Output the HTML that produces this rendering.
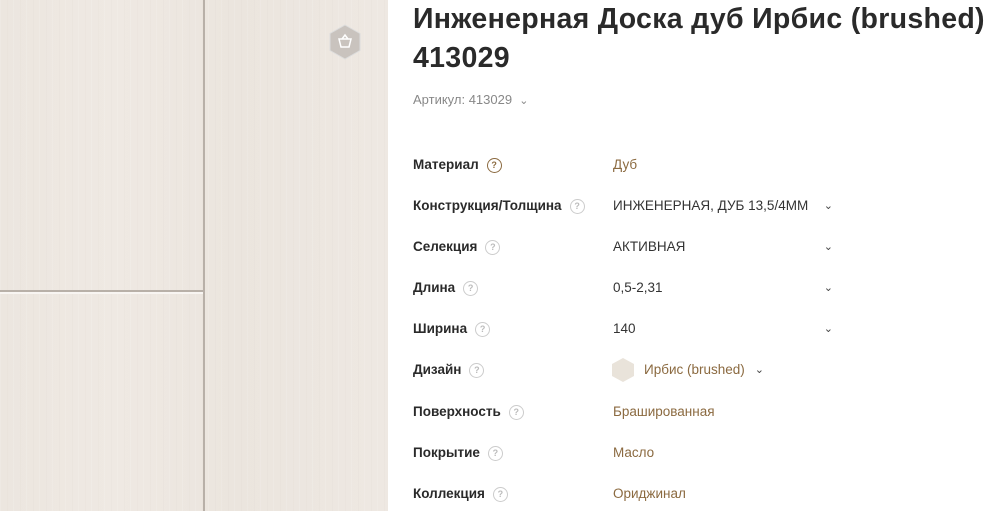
<!DOCTYPE html>
<html><head><meta charset="utf-8"><style>
body{margin:0;width:992px;height:511px;overflow:hidden;background:#fff;font-family:"Liberation Sans","DejaVu Sans",sans-serif;position:relative}
.img{position:absolute;left:0;top:0;width:388px;height:511px;background:linear-gradient(90deg,#ece6df,#efe9e3 30%,#ebe5de 60%,#eee8e2);overflow:hidden}
.img:before{content:"";position:absolute;inset:0;background:repeating-linear-gradient(90deg,rgba(255,255,255,.12) 0 1px,transparent 1px 7px,rgba(200,190,180,.07) 7px 8px,transparent 8px 13px)}
.vs{position:absolute;left:203px;top:0;width:2px;height:511px;background:#b8b0a8}
.hs{position:absolute;left:0;top:290px;width:203px;height:2px;background:#b8b0a8}
.hs2{position:absolute;left:0;top:292px;width:203px;height:2px;background:#f8f5f2}
h1{position:absolute;left:413px;top:0px;margin:0;font-size:28.5px;line-height:39px;font-weight:bold;color:#2a2a2a;letter-spacing:.3px;white-space:nowrap}
.art{position:absolute;left:413px;top:92px;font-size:13px;color:#888}
.row{position:absolute;left:413px;width:420px;height:20px;font-size:13.5px;line-height:20px}
.l{position:absolute;left:0;font-weight:bold;color:#2a2a2a}
.q{display:inline-block;width:13px;height:13px;border:1.3px solid #ccc;border-radius:50%;font-size:9px;line-height:13px;text-align:center;color:#bbb;font-weight:bold;vertical-align:1px;margin-left:8px}
.v{position:absolute;left:200px;color:#8b6a40}
.d{color:#333}
.c{position:absolute;right:0;top:0;font-size:11px;color:#444}
</style></head><body>
<div class="img"><div class="vs"></div><div class="hs"></div><div class="hs2"></div>
<svg style="position:absolute;left:329px;top:24px" width="32" height="36" viewBox="0 0 32 36"><polygon points="16,1 31,9.5 31,26.5 16,35 1,26.5 1,9.5" fill="#c9c3be" stroke="#ddd" /><path d="M10 15h12l-2 8h-8z M13 15l3-4 3 4" fill="none" stroke="#fff" stroke-width="1.5"/></svg></div>
<h1>Инженерная Доска дуб Ирбис (brushed)<br>413029</h1>
<div class="art">Артикул: 413029 &nbsp;<span style="font-size:11px">&#8964;</span></div>
<div class="row" style="top:155px"><span class="l">Материал<span class="q" style="border-color:#8b6a40;color:#8b6a40">?</span></span><span class="v">Дуб</span></div>
<div class="row" style="top:196px"><span class="l">Конструкция/Толщина<span class="q">?</span></span><span class="v d">ИНЖЕНЕРНАЯ, ДУБ 13,5/4ММ</span><span class="c">⌄</span></div>
<div class="row" style="top:237px"><span class="l">Селекция<span class="q">?</span></span><span class="v d">АКТИВНАЯ</span><span class="c">⌄</span></div>
<div class="row" style="top:278px"><span class="l">Длина<span class="q">?</span></span><span class="v d">0,5-2,31</span><span class="c">⌄</span></div>
<div class="row" style="top:319px"><span class="l">Ширина<span class="q">?</span></span><span class="v d">140</span><span class="c">⌄</span></div>
<div class="row" style="top:360px"><span class="l">Дизайн<span class="q">?</span></span><span class="v" style="left:199px;top:-2px;display:flex;align-items:center;height:24px"><svg width="22" height="24" style="margin-right:10px" viewBox="0 0 22 24"><polygon points="11,0 22,6 22,18 11,24 0,18 0,6" fill="#e9e3da"/></svg>Ирбис (brushed)<span style="color:#444;font-size:11px;margin-left:10px">⌄</span></span></div>
<div class="row" style="top:402px"><span class="l">Поверхность<span class="q">?</span></span><span class="v">Брашированная</span></div>
<div class="row" style="top:443px"><span class="l">Покрытие<span class="q">?</span></span><span class="v">Масло</span></div>
<div class="row" style="top:484px"><span class="l">Коллекция<span class="q">?</span></span><span class="v">Ориджинал</span></div>
</body></html>
